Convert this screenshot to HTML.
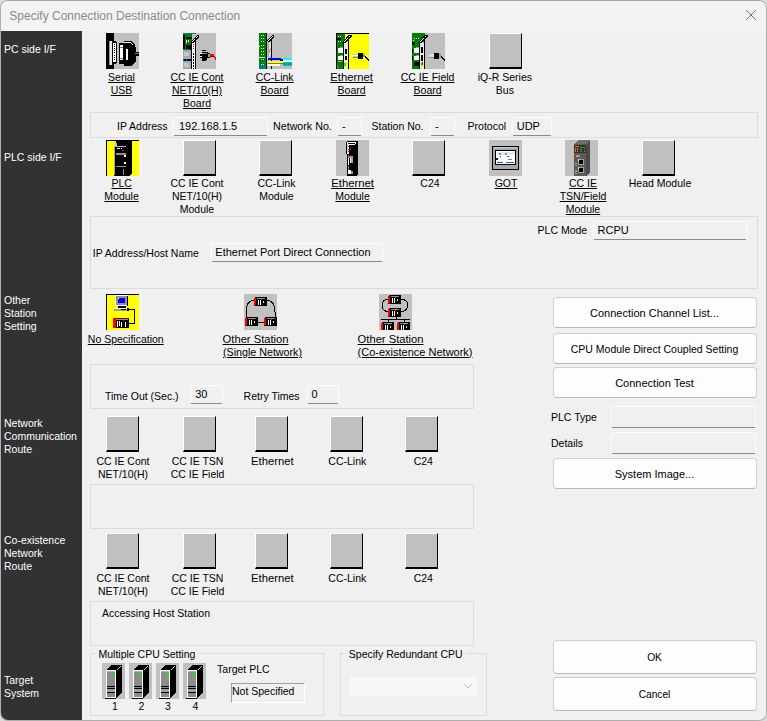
<!DOCTYPE html><html><head><meta charset="utf-8"><style>
html,body{margin:0;padding:0;}
body{width:767px;height:721px;overflow:hidden;position:relative;background:#dcdcdc;font-family:"Liberation Sans",sans-serif;}
.t{position:absolute;white-space:nowrap;}
.a{position:absolute;box-sizing:border-box;}
.gb{position:absolute;box-sizing:border-box;border:1px solid #dcdcdc;}
.fld{position:absolute;box-sizing:border-box;background:#f0f0f0;border:1px solid #fcfcfc;border-bottom:1px solid #8a8a8a;border-radius:2px;}
.btn{position:absolute;box-sizing:border-box;background:#fdfdfd;border:1px solid #d0d0d0;border-bottom-color:#b9b9b9;border-radius:4px;}
.gi{position:absolute;box-sizing:border-box;background:#c0c0c0;border-top:1px solid #fff;border-left:1px solid #fff;border-right:1px solid #000;border-bottom:2px solid #000;}
.ic{position:absolute;}
</style></head><body>
<div class="a" style="left:0px;top:0px;width:767px;height:721px;border:1px solid #b0b0b0;border-top-color:#93a9b3;border-radius:8px;background:#f0f0f0;"></div>
<div class="a" style="left:1px;top:1px;width:765px;height:30px;background:#f3f3f3;border-radius:7px 7px 0 0;"></div>
<div class="t" style="left:9.3px;top:7.84px;font-size:12px;line-height:16px;color:#8a8a8a;">Specify Connection Destination Connection</div>
<svg style="position:absolute;left:744px;top:8px" width="14" height="14"><path d="M2 2 L12 12 M12 2 L2 12" stroke="#777" stroke-width="1" fill="none"/></svg>
<div class="a" style="left:1px;top:31px;width:81px;height:689px;background:#323232;border-radius:0 0 0 7px;"></div>
<div class="t" style="left:4px;top:41.26px;font-size:10.5px;line-height:16px;color:#fff;">PC side I/F</div>
<div class="t" style="left:4px;top:149.46px;font-size:10.5px;line-height:16px;color:#fff;">PLC side I/F</div>
<div class="t" style="left:4px;top:292.16px;font-size:10.5px;line-height:16px;color:#fff;">Other</div>
<div class="t" style="left:4px;top:305.16px;font-size:10.5px;line-height:16px;color:#fff;">Station</div>
<div class="t" style="left:4px;top:318.16px;font-size:10.5px;line-height:16px;color:#fff;">Setting</div>
<div class="t" style="left:4px;top:414.76px;font-size:10.5px;line-height:16px;color:#fff;">Network</div>
<div class="t" style="left:4px;top:427.66px;font-size:10.5px;line-height:16px;color:#fff;">Communication</div>
<div class="t" style="left:4px;top:440.66px;font-size:10.5px;line-height:16px;color:#fff;">Route</div>
<div class="t" style="left:4px;top:531.86px;font-size:10.5px;line-height:16px;color:#fff;">Co-existence</div>
<div class="t" style="left:4px;top:544.86px;font-size:10.5px;line-height:16px;color:#fff;">Network</div>
<div class="t" style="left:4px;top:557.86px;font-size:10.5px;line-height:16px;color:#fff;">Route</div>
<div class="t" style="left:4px;top:671.86px;font-size:10.5px;line-height:16px;color:#fff;">Target</div>
<div class="t" style="left:4px;top:684.86px;font-size:10.5px;line-height:16px;color:#fff;">System</div>
<svg class="ic" style="left:106px;top:33px" width="33" height="36" shape-rendering="crispEdges"><rect x="0" y="0" width="33" height="36" fill="#c0c0c0"/><rect x="0" y="0" width="8" height="36" fill="#000"/><rect x="3" y="8" width="3" height="24" fill="#e6e6e6"/><rect x="3" y="8" width="1" height="24" fill="#9a9a9a"/><rect x="3" y="9" width="1" height="1" fill="#a0a000"/><rect x="3" y="28" width="1" height="3" fill="#a0a000"/><path d="M6 8h3l2 2v19l-2 2h-3z" fill="#000"/><rect x="7" y="10" width="3" height="19" fill="#fff"/><rect x="8" y="11" width="1" height="1" fill="#000"/><rect x="8" y="13" width="1" height="1" fill="#000"/><rect x="8" y="15" width="1" height="1" fill="#000"/><rect x="8" y="17" width="1" height="1" fill="#000"/><rect x="8" y="19" width="1" height="1" fill="#000"/><rect x="8" y="22" width="1" height="1" fill="#000"/><rect x="8" y="24" width="1" height="1" fill="#000"/><rect x="8" y="26" width="1" height="1" fill="#000"/><path d="M13 10h5v-2h7l4 4v2l1 1v4h3v4h-3v5l-5 5h-7v-2h-5z" fill="#000"/><rect x="14" y="12" width="3" height="15" fill="#fff"/><rect x="14" y="14" width="3" height="1" fill="#808080"/><rect x="14" y="25" width="3" height="1" fill="#808080"/><path d="M18 9h6l3 3" fill="none" stroke="#fff" stroke-width="1"/><rect x="20" y="16" width="2" height="11" fill="#fff"/><rect x="29" y="20" width="4" height="1" fill="#808080"/></svg>
<div class="t" style="left:51.5px;width:140px;text-align:center;top:69.06px;font-size:10.5px;line-height:16px;color:#000;text-decoration:underline;text-underline-offset:1px;">Serial</div>
<div class="t" style="left:51.5px;width:140px;text-align:center;top:82.06px;font-size:10.5px;line-height:16px;color:#000;text-decoration:underline;text-underline-offset:1px;">USB</div>
<svg class="ic" style="left:183px;top:33px" width="33" height="36" shape-rendering="crispEdges"><rect x="0" y="0" width="33" height="36" fill="#c0c0c0"/><rect x="0" y="0" width="13" height="1" fill="#008080"/><rect x="0" y="1" width="9" height="16" fill="#008000"/><rect x="0" y="2" width="2" height="15" fill="#000"/><rect x="3" y="4" width="6" height="2" fill="#000"/><rect x="3" y="7" width="1" height="3" fill="#fff"/><rect x="5" y="7" width="1" height="2" fill="#fff"/><rect x="3" y="12" width="5" height="5" fill="#000"/><rect x="3" y="13" width="1" height="3" fill="#0000a0"/><rect x="0" y="16" width="7" height="1" fill="#008080"/><rect x="0" y="17" width="8" height="19" fill="#a8a8a8"/><rect x="1" y="19" width="5" height="4" fill="#c8c8c8"/><rect x="1" y="30" width="5" height="4" fill="#c8c8c8"/><rect x="0" y="26" width="8" height="2" fill="#000080"/><rect x="0" y="26" width="1" height="2" fill="#008000"/><rect x="3" y="26" width="1" height="2" fill="#008000"/><path d="M8.5 8.5l6-6h1v1.5l-6 6z" fill="#fff" stroke="#000" stroke-width="1"/><rect x="9" y="10" width="3" height="26" fill="#fff"/><rect x="8" y="9" width="1" height="27" fill="#000"/><rect x="12" y="5" width="1" height="31" fill="#000"/><rect x="10" y="11" width="1" height="1" fill="#ff0000"/><rect x="10" y="13" width="1" height="1" fill="#ff0000"/><rect x="10" y="15" width="1" height="1" fill="#ff0000"/><rect x="10" y="20" width="1" height="2" fill="#000"/><rect x="10" y="23" width="1" height="2" fill="#000"/><rect x="10" y="26" width="1" height="2" fill="#000"/><rect x="10" y="29" width="1" height="2" fill="#000"/><rect x="10" y="32" width="1" height="2" fill="#000"/><rect x="10" y="35" width="1" height="2" fill="#000"/><rect x="19" y="17" width="4" height="1" fill="#000"/><rect x="19" y="19" width="6" height="1" fill="#000"/><rect x="17" y="20" width="2" height="1" fill="#fff"/><rect x="19" y="20" width="5" height="1" fill="#909090"/><rect x="24" y="20" width="3" height="1" fill="#000"/><rect x="17" y="21" width="10" height="4" fill="#000"/><rect x="17" y="23" width="2" height="1" fill="#fff"/><rect x="19" y="25" width="5" height="2" fill="#000"/><rect x="19" y="27" width="4" height="1" fill="#000"/><rect x="25" y="21" width="2" height="3" fill="#a0a0a0"/><rect x="27" y="21" width="4" height="2" fill="#ff0000"/><rect x="27" y="23" width="4" height="1" fill="#900000"/><rect x="31" y="23" width="1" height="2" fill="#ff0000"/><rect x="32" y="24" width="1" height="3" fill="#ff0000"/></svg>
<div class="t" style="left:127.0px;width:140px;text-align:center;top:69.06px;font-size:10.5px;line-height:16px;color:#000;text-decoration:underline;text-underline-offset:1px;">CC IE Cont</div>
<div class="t" style="left:127.0px;width:140px;text-align:center;top:82.06px;font-size:10.5px;line-height:16px;color:#000;text-decoration:underline;text-underline-offset:1px;">NET/10(H)</div>
<div class="t" style="left:127.0px;width:140px;text-align:center;top:95.06px;font-size:10.5px;line-height:16px;color:#000;text-decoration:underline;text-underline-offset:1px;">Board</div>
<svg class="ic" style="left:259px;top:33px" width="33" height="36" shape-rendering="crispEdges"><rect x="0" y="0" width="33" height="36" fill="#c0c0c0"/><rect x="0" y="0" width="7" height="36" fill="#008000"/><rect x="7" y="0" width="1" height="36" fill="#000"/><rect x="2" y="2" width="1" height="1" fill="#fff"/><rect x="4" y="2" width="1" height="1" fill="#fff"/><rect x="2" y="5" width="1" height="1" fill="#fff"/><rect x="4" y="5" width="1" height="1" fill="#fff"/><rect x="2" y="8" width="1" height="1" fill="#fff"/><rect x="4" y="8" width="1" height="1" fill="#fff"/><rect x="2" y="12" width="1" height="1" fill="#fff"/><rect x="4" y="12" width="1" height="1" fill="#fff"/><rect x="2" y="15" width="1" height="1" fill="#fff"/><rect x="4" y="15" width="1" height="1" fill="#fff"/><rect x="2" y="18" width="1" height="1" fill="#fff"/><rect x="4" y="18" width="1" height="1" fill="#fff"/><rect x="2" y="21" width="1" height="1" fill="#fff"/><rect x="4" y="21" width="1" height="1" fill="#fff"/><rect x="2" y="26" width="1" height="1" fill="#fff"/><rect x="4" y="26" width="1" height="1" fill="#fff"/><rect x="0" y="13" width="1" height="1" fill="#fff"/><rect x="0" y="24" width="6" height="1" fill="#fff"/><rect x="0" y="29" width="7" height="1" fill="#008080"/><rect x="0" y="32" width="7" height="4" fill="#008080"/><rect x="2" y="31" width="1" height="1" fill="#fff"/><rect x="4" y="31" width="1" height="1" fill="#fff"/><path d="M8.5 7.5l5-5h1v1.5l-5 5z" fill="#fff" stroke="#000" stroke-width="1"/><rect x="9" y="9" width="3" height="14" fill="#e0e0e0"/><rect x="9" y="9" width="1" height="14" fill="#a0a0a0"/><rect x="12" y="5" width="1" height="31" fill="#000"/><rect x="11" y="16" width="1" height="1" fill="#ff0000"/><rect x="10" y="18" width="1" height="1" fill="#ff0000"/><rect x="9" y="25" width="13" height="2" fill="#0000ff"/><rect x="21" y="26" width="3" height="2" fill="#0000a0"/><rect x="9" y="28" width="15" height="2" fill="#ffff00"/><rect x="9" y="30" width="15" height="1" fill="#808000"/><rect x="9" y="31" width="12" height="2" fill="#fff"/><rect x="8" y="25" width="1" height="1" fill="#fff"/><rect x="8" y="28" width="1" height="1" fill="#fff"/><rect x="8" y="31" width="1" height="1" fill="#fff"/><rect x="24" y="25" width="9" height="2" fill="#00ffff"/><rect x="24" y="27" width="9" height="2" fill="#fff"/><rect x="24" y="29" width="9" height="4" fill="#00c0c0"/><rect x="25" y="30" width="1" height="2" fill="#008080"/><rect x="27" y="30" width="1" height="2" fill="#008080"/><rect x="29" y="30" width="1" height="2" fill="#008080"/><rect x="31" y="30" width="1" height="2" fill="#008080"/></svg>
<div class="t" style="left:204.60000000000002px;width:140px;text-align:center;top:69.06px;font-size:10.5px;line-height:16px;color:#000;text-decoration:underline;text-underline-offset:1px;">CC-Link</div>
<div class="t" style="left:204.60000000000002px;width:140px;text-align:center;top:82.06px;font-size:10.5px;line-height:16px;color:#000;text-decoration:underline;text-underline-offset:1px;">Board</div>
<svg class="ic" style="left:336px;top:33px" width="33" height="36" shape-rendering="crispEdges"><rect x="0" y="0" width="33" height="36" fill="#ffff00"/><rect x="0" y="0" width="33" height="1" fill="#000"/><rect x="0" y="0" width="1" height="36" fill="#000"/><rect x="1" y="1" width="8" height="35" fill="#008000"/><rect x="1" y="5" width="4" height="2" fill="#000"/><rect x="2" y="3" width="1" height="1" fill="#fff"/><rect x="4" y="3" width="1" height="1" fill="#fff"/><rect x="2" y="8" width="1" height="1" fill="#fff"/><rect x="4" y="8" width="1" height="1" fill="#fff"/><rect x="2" y="15" width="6" height="5" fill="#fff"/><rect x="4" y="14" width="4" height="1" fill="#a0a0a0"/><rect x="2" y="23" width="6" height="4" fill="#fff"/><rect x="4" y="22" width="4" height="1" fill="#a0a0a0"/><rect x="2" y="28" width="4" height="1" fill="#a0a0a0"/><rect x="1" y="32" width="1" height="3" fill="#c08000"/><rect x="7" y="33" width="2" height="3" fill="#000"/><rect x="13" y="1" width="1" height="35" fill="#ffff00"/><path d="M7.5 8.5l6-6.5h1.5v1.5l-7 7z" fill="#fff" stroke="#000" stroke-width="1"/><rect x="8" y="10" width="4" height="26" fill="#e8e8e8"/><rect x="7" y="9" width="1" height="27" fill="#000"/><rect x="12" y="3" width="1" height="33" fill="#000"/><rect x="9" y="16" width="2" height="5" fill="#000"/><rect x="9" y="23" width="2" height="4" fill="#000"/><rect x="8" y="30" width="2" height="3" fill="#00ff00"/><rect x="10" y="28" width="2" height="6" fill="#ffff00"/><rect x="17" y="21" width="5" height="4" fill="#c8c8c8"/><rect x="17" y="22" width="5" height="1" fill="#fff"/><rect x="17" y="24" width="5" height="1" fill="#808080"/><rect x="22" y="20" width="5" height="6" fill="#000"/><rect x="27" y="21" width="2" height="3" fill="#909090"/><path d="M29 23l4 5" fill="none" stroke="#000" stroke-width="1.2"/></svg>
<div class="t" style="left:281.6px;width:140px;text-align:center;top:68.78px;font-size:11.3px;line-height:16px;color:#000;text-decoration:underline;text-underline-offset:1px;">Ethernet</div>
<div class="t" style="left:281.6px;width:140px;text-align:center;top:82.06px;font-size:10.5px;line-height:16px;color:#000;text-decoration:underline;text-underline-offset:1px;">Board</div>
<svg class="ic" style="left:412px;top:33px" width="33" height="36" shape-rendering="crispEdges"><rect x="0" y="0" width="33" height="36" fill="#c0c0c0"/><rect x="0" y="0" width="13" height="9" fill="#008000"/><rect x="0" y="9" width="9" height="27" fill="#008000"/><rect x="2" y="5" width="1" height="1" fill="#fff"/><rect x="4" y="5" width="1" height="1" fill="#fff"/><rect x="6" y="5" width="1" height="1" fill="#fff"/><rect x="1" y="7" width="1" height="1" fill="#fff"/><rect x="0" y="9" width="3" height="3" fill="#000"/><rect x="0" y="16" width="1" height="4" fill="#000"/><rect x="0" y="23" width="1" height="4" fill="#000"/><rect x="2" y="15" width="6" height="5" fill="#fff"/><rect x="4" y="14" width="4" height="1" fill="#a0a0a0"/><rect x="2" y="23" width="6" height="4" fill="#fff"/><rect x="4" y="22" width="4" height="1" fill="#a0a0a0"/><rect x="2" y="29" width="6" height="4" fill="#000"/><rect x="13" y="0" width="1" height="36" fill="#c0c0c0"/><path d="M7.5 8.5l6-6.5h1.5v1.5l-7 7z" fill="#fff" stroke="#000" stroke-width="1"/><rect x="8" y="10" width="4" height="26" fill="#e8e8e8"/><rect x="7" y="9" width="1" height="27" fill="#000"/><rect x="12" y="3" width="1" height="33" fill="#000"/><rect x="9" y="14" width="2" height="6" fill="#000"/><rect x="9" y="22" width="2" height="6" fill="#000"/><rect x="9" y="29" width="1" height="4" fill="#00ff00"/><rect x="10" y="29" width="1" height="3" fill="#ff0000"/><rect x="10" y="33" width="2" height="2" fill="#ffff00"/><rect x="17" y="21" width="5" height="4" fill="#e0e0e0"/><rect x="17" y="24" width="5" height="1" fill="#909090"/><rect x="22" y="20" width="5" height="6" fill="#000"/><rect x="27" y="21" width="2" height="3" fill="#909090"/><path d="M29 23l4 5" fill="none" stroke="#000" stroke-width="1.2"/></svg>
<div class="t" style="left:357.6px;width:140px;text-align:center;top:69.06px;font-size:10.5px;line-height:16px;color:#000;text-decoration:underline;text-underline-offset:1px;">CC IE Field</div>
<div class="t" style="left:357.6px;width:140px;text-align:center;top:82.06px;font-size:10.5px;line-height:16px;color:#000;text-decoration:underline;text-underline-offset:1px;">Board</div>
<div class="gi" style="left:489px;top:33px;width:33px;height:36px;"></div>
<div class="t" style="left:434.9px;width:140px;text-align:center;top:69.06px;font-size:10.5px;line-height:16px;color:#000;">iQ-R Series</div>
<div class="t" style="left:434.9px;width:140px;text-align:center;top:82.06px;font-size:10.5px;line-height:16px;color:#000;">Bus</div>
<div class="gb" style="left:90px;top:112px;width:668px;height:26px;"></div>
<div class="t" style="left:117px;top:118.06px;font-size:10.5px;line-height:16px;color:#000;">IP Address</div>
<div class="fld" style="left:173px;top:117px;width:95px;height:19px;"></div>
<div class="t" style="left:179px;top:117.79px;font-size:11px;line-height:16px;color:#000;">192.168.1.5</div>
<div class="t" style="left:273px;top:117.99px;font-size:10.7px;line-height:16px;color:#000;">Network No.</div>
<div class="fld" style="left:337px;top:117px;width:25px;height:19px;"></div>
<div class="t" style="left:342px;top:117.79px;font-size:11px;line-height:16px;color:#000;">-</div>
<div class="t" style="left:371.6px;top:118.06px;font-size:10.5px;line-height:16px;color:#000;">Station No.</div>
<div class="fld" style="left:430px;top:117px;width:25px;height:19px;"></div>
<div class="t" style="left:435px;top:117.79px;font-size:11px;line-height:16px;color:#000;">-</div>
<div class="t" style="left:467.6px;top:118.06px;font-size:10.5px;line-height:16px;color:#000;">Protocol</div>
<div class="fld" style="left:512px;top:117px;width:40px;height:19px;"></div>
<div class="t" style="left:516.7px;top:117.79px;font-size:11px;line-height:16px;color:#000;">UDP</div>
<svg class="ic" style="left:106px;top:140px" width="33" height="36" shape-rendering="crispEdges"><rect x="0" y="0" width="33" height="36" fill="#ffff00"/><rect x="0" y="0" width="33" height="1" fill="#000"/><rect x="0" y="1" width="1" height="35" fill="#000"/><path d="M10 1h16v32l-3 3h-15v-30l2-2z" fill="#000"/><rect x="8" y="6" width="1" height="29" fill="#a0a0a0"/><rect x="9" y="6" width="11" height="1" fill="#b0b0b0"/><rect x="11" y="8" width="3" height="1" fill="#fff"/><rect x="15" y="8" width="1" height="1" fill="#fff"/><rect x="16" y="10" width="2" height="1" fill="#ff0000"/><rect x="10" y="13" width="10" height="2" fill="#909090"/><rect x="18" y="15" width="2" height="2" fill="#fff"/><rect x="18" y="22" width="2" height="2" fill="#fff"/><rect x="10" y="26" width="10" height="1" fill="#909090"/><rect x="17" y="29" width="1" height="6" fill="#909090"/><rect x="9" y="3" width="2" height="3" fill="#c0c0c0"/></svg>
<div class="t" style="left:51.599999999999994px;width:140px;text-align:center;top:174.86px;font-size:10.5px;line-height:16px;color:#000;text-decoration:underline;text-underline-offset:1px;">PLC</div>
<div class="t" style="left:51.599999999999994px;width:140px;text-align:center;top:187.86px;font-size:10.5px;line-height:16px;color:#000;text-decoration:underline;text-underline-offset:1px;">Module</div>
<div class="gi" style="left:183px;top:140px;width:33px;height:36px;"></div>
<div class="t" style="left:127.0px;width:140px;text-align:center;top:174.86px;font-size:10.5px;line-height:16px;color:#000;">CC IE Cont</div>
<div class="t" style="left:127.0px;width:140px;text-align:center;top:187.86px;font-size:10.5px;line-height:16px;color:#000;">NET/10(H)</div>
<div class="t" style="left:127.0px;width:140px;text-align:center;top:200.86px;font-size:10.5px;line-height:16px;color:#000;">Module</div>
<div class="gi" style="left:259px;top:140px;width:33px;height:36px;"></div>
<div class="t" style="left:206.5px;width:140px;text-align:center;top:174.86px;font-size:10.5px;line-height:16px;color:#000;">CC-Link</div>
<div class="t" style="left:206.5px;width:140px;text-align:center;top:187.86px;font-size:10.5px;line-height:16px;color:#000;">Module</div>
<svg class="ic" style="left:336px;top:140px" width="33" height="36" shape-rendering="crispEdges"><rect x="0" y="0" width="33" height="36" fill="#c0c0c0"/><path d="M12 1h10v33l-2 2h-9v-21l-1-1v-12z" fill="#000"/><path d="M11 4l1-2h8l-1 2h-7v10" fill="none" stroke="#fff" stroke-width="1"/><rect x="11" y="4" width="1" height="10" fill="#d0d0d0"/><rect x="12" y="6" width="1" height="1" fill="#ff0000"/><rect x="12" y="9" width="1" height="1" fill="#ff0000"/><rect x="12" y="11" width="1" height="1" fill="#ff0000"/><rect x="14" y="8" width="1" height="2" fill="#ff0000"/><rect x="12" y="15" width="1" height="1" fill="#ff0000"/><rect x="14" y="15" width="1" height="1" fill="#ff0000"/><rect x="12" y="16" width="5" height="2" fill="#909090"/><rect x="12" y="18" width="1" height="7" fill="#fff"/><rect x="14" y="18" width="2" height="5" fill="#fff"/><rect x="15" y="16" width="2" height="7" fill="#a0a0a0"/><rect x="12" y="26" width="1" height="4" fill="#909090"/><rect x="12" y="30" width="3" height="4" fill="#fff"/><rect x="15" y="31" width="2" height="3" fill="#909090"/></svg>
<div class="t" style="left:282.6px;width:140px;text-align:center;top:174.58px;font-size:11.3px;line-height:16px;color:#000;text-decoration:underline;text-underline-offset:1px;">Ethernet</div>
<div class="t" style="left:282.6px;width:140px;text-align:center;top:187.86px;font-size:10.5px;line-height:16px;color:#000;text-decoration:underline;text-underline-offset:1px;">Module</div>
<div class="gi" style="left:412px;top:140px;width:33px;height:36px;"></div>
<div class="t" style="left:360.0px;width:140px;text-align:center;top:174.86px;font-size:10.5px;line-height:16px;color:#000;">C24</div>
<svg class="ic" style="left:489px;top:140px" width="33" height="36" shape-rendering="crispEdges"><rect x="0" y="0" width="33" height="36" fill="#c0c0c0"/><rect x="3" y="6" width="27" height="24" fill="#000"/><rect x="4" y="7" width="25" height="22" fill="#a8a8a8"/><rect x="5" y="7" width="23" height="1" fill="#d0d0d0"/><rect x="6" y="10" width="21" height="15" fill="#000"/><rect x="7" y="11" width="19" height="13" fill="#fff"/><rect x="8" y="12" width="18" height="3" fill="#e4e8f0"/><rect x="10" y="13" width="2" height="2" fill="#8090a0"/><rect x="16" y="13" width="2" height="2" fill="#8090a0"/><rect x="11" y="16" width="1" height="1" fill="#1050a0"/><rect x="18" y="16" width="2" height="1" fill="#1050a0"/><rect x="7" y="18" width="2" height="2" fill="#002040"/><rect x="19" y="19" width="4" height="1" fill="#6080a0"/><rect x="8" y="22" width="6" height="1" fill="#2060a0"/><rect x="17" y="22" width="8" height="1" fill="#2060a0"/></svg>
<div class="t" style="left:436.0px;width:140px;text-align:center;top:174.86px;font-size:10.5px;line-height:16px;color:#000;text-decoration:underline;text-underline-offset:1px;">GOT</div>
<svg class="ic" style="left:565px;top:140px" width="33" height="36" shape-rendering="crispEdges"><rect x="0" y="0" width="33" height="36" fill="#c0c0c0"/><path d="M9 4l4-4h12l-4 4z" fill="#6e6e6e"/><path d="M21 4l4-4v32l-4 4z" fill="#4a4a4a"/><rect x="9" y="4" width="12" height="32" fill="#5a5a5a"/><rect x="9" y="5" width="12" height="8" fill="#303030"/><rect x="10" y="6" width="4" height="1" fill="#ff6600"/><rect x="10" y="8" width="1" height="4" fill="#ff6600"/><rect x="12" y="8" width="1" height="4" fill="#ff6600"/><rect x="15" y="7" width="2" height="1" fill="#00e000"/><rect x="15" y="9" width="2" height="1" fill="#00e000"/><rect x="18" y="7" width="2" height="1" fill="#00e000"/><rect x="19" y="7" width="1" height="1" fill="#ff6600"/><rect x="19" y="9" width="1" height="1" fill="#ff6600"/><rect x="19" y="11" width="1" height="1" fill="#ff6600"/><rect x="15" y="11" width="2" height="1" fill="#707070"/><rect x="11" y="15" width="4" height="2" fill="#a0a0a0"/><rect x="13" y="19" width="6" height="6" fill="#a0a0a0"/><rect x="14" y="20" width="4" height="4" fill="#000"/><rect x="13" y="19" width="1" height="2" fill="#ffff00"/><rect x="13" y="27" width="6" height="6" fill="#a0a0a0"/><rect x="14" y="28" width="4" height="4" fill="#000"/><rect x="13" y="27" width="1" height="2" fill="#ffff00"/><rect x="10" y="23" width="2" height="1" fill="#a0a0a0"/><rect x="10" y="25" width="2" height="1" fill="#a0a0a0"/><rect x="10" y="30" width="2" height="2" fill="#a0a0a0"/><rect x="10" y="33" width="2" height="1" fill="#a0a0a0"/></svg>
<div class="t" style="left:513.0px;width:140px;text-align:center;top:174.86px;font-size:10.5px;line-height:16px;color:#000;text-decoration:underline;text-underline-offset:1px;">CC IE</div>
<div class="t" style="left:513.0px;width:140px;text-align:center;top:187.86px;font-size:10.5px;line-height:16px;color:#000;text-decoration:underline;text-underline-offset:1px;">TSN/Field</div>
<div class="t" style="left:513.0px;width:140px;text-align:center;top:200.86px;font-size:10.5px;line-height:16px;color:#000;text-decoration:underline;text-underline-offset:1px;">Module</div>
<div class="gi" style="left:642px;top:140px;width:33px;height:36px;"></div>
<div class="t" style="left:590.0px;width:140px;text-align:center;top:174.86px;font-size:10.5px;line-height:16px;color:#000;">Head Module</div>
<div class="gb" style="left:90px;top:216px;width:668px;height:73px;"></div>
<div class="t" style="left:537.6px;top:221.96px;font-size:10.5px;line-height:16px;color:#000;">PLC Mode</div>
<div class="fld" style="left:593px;top:221px;width:154px;height:19px;"></div>
<div class="t" style="left:597.5px;top:221.79px;font-size:11px;line-height:16px;color:#000;">RCPU</div>
<div class="t" style="left:92.8px;top:244.66px;font-size:10.5px;line-height:16px;color:#000;">IP Address/Host Name</div>
<div class="fld" style="left:211px;top:243px;width:172px;height:19px;"></div>
<div class="t" style="left:215.3px;top:243.79px;font-size:11px;line-height:16px;color:#000;">Ethernet Port Direct Connection</div>
<svg class="ic" style="left:106px;top:294px" width="33" height="36" shape-rendering="crispEdges"><rect x="0" y="0" width="33" height="36" fill="#ffff00"/><rect x="0" y="0" width="33" height="1" fill="#000"/><rect x="0" y="1" width="1" height="35" fill="#000"/><rect x="9" y="1" width="13" height="11" fill="#fff"/><rect x="10" y="2" width="11" height="9" fill="#909090"/><rect x="12" y="4" width="7" height="5" fill="#0000ff"/><rect x="12" y="4" width="1" height="1" fill="#fff"/><rect x="21" y="2" width="1" height="10" fill="#000"/><rect x="12" y="12" width="8" height="2" fill="#000"/><rect x="8" y="14" width="13" height="3" fill="#a0a0a0"/><rect x="8" y="14" width="13" height="1" fill="#fff"/><rect x="14" y="15" width="1" height="1" fill="#00ff00"/><rect x="15" y="15" width="5" height="1" fill="#000"/><rect x="21" y="14" width="2" height="3" fill="#000"/><rect x="23" y="15" width="6" height="1" fill="#000"/><rect x="28" y="15" width="1" height="15" fill="#000"/><rect x="23" y="29" width="6" height="1" fill="#000"/><rect x="7" y="24" width="3" height="10" fill="#ff0000"/><rect x="9" y="24" width="14" height="1" fill="#800000"/><rect x="10" y="25" width="13" height="9" fill="#000"/><rect x="10" y="25" width="12" height="1" fill="#909090"/><rect x="11" y="27" width="1" height="6" fill="#fff"/><rect x="13" y="27" width="1" height="5" fill="#fff"/><rect x="15" y="28" width="1" height="5" fill="#fff"/><rect x="17" y="26" width="1" height="1" fill="#ff0000"/><rect x="19" y="28" width="1" height="5" fill="#fff"/></svg>
<div class="t" style="left:87.8px;top:330.86px;font-size:10.5px;line-height:16px;color:#000;text-decoration:underline;text-underline-offset:1px;">No Specification</div>
<svg class="ic" style="left:244px;top:294px" width="33" height="36" shape-rendering="crispEdges"><rect x="0" y="0" width="33" height="36" fill="#c0c0c0"/><path d="M10 6 C3 7 2 13 2 18 L2 24 M23 6 C30 7 31 13 31 18 L31 24 M14 28 L20 28" fill="none" stroke="#000" stroke-width="1"/><rect x="10" y="4" width="2" height="8" fill="#ff0000"/><rect x="11" y="3" width="2" height="1" fill="#800000"/><rect x="10" y="11" width="2" height="1" fill="#800000"/><rect x="12" y="3" width="11" height="9" fill="#000"/><rect x="13" y="4" width="8" height="1" fill="#909090"/><rect x="14" y="6" width="1" height="5" fill="#fff"/><rect x="16" y="6" width="1" height="5" fill="#fff"/><rect x="17" y="5" width="1" height="1" fill="#ff0000"/><rect x="19" y="7" width="1" height="2" fill="#ffff00"/><rect x="1" y="24" width="2" height="8" fill="#ff0000"/><rect x="2" y="23" width="2" height="1" fill="#800000"/><rect x="1" y="31" width="2" height="1" fill="#800000"/><rect x="3" y="23" width="11" height="9" fill="#000"/><rect x="4" y="24" width="8" height="1" fill="#909090"/><rect x="5" y="26" width="1" height="5" fill="#fff"/><rect x="7" y="26" width="1" height="5" fill="#fff"/><rect x="8" y="25" width="1" height="1" fill="#ff0000"/><rect x="10" y="27" width="1" height="2" fill="#ffff00"/><rect x="20" y="24" width="2" height="8" fill="#ff0000"/><rect x="21" y="23" width="2" height="1" fill="#800000"/><rect x="20" y="31" width="2" height="1" fill="#800000"/><rect x="22" y="23" width="11" height="9" fill="#000"/><rect x="23" y="24" width="8" height="1" fill="#909090"/><rect x="24" y="26" width="1" height="5" fill="#fff"/><rect x="26" y="26" width="1" height="5" fill="#fff"/><rect x="27" y="25" width="1" height="1" fill="#ff0000"/><rect x="29" y="27" width="1" height="2" fill="#ffff00"/></svg>
<div class="t" style="left:222.6px;top:330.62px;font-size:11.2px;line-height:16px;color:#000;text-decoration:underline;text-underline-offset:1px;">Other Station</div>
<div class="t" style="left:223px;top:343.79px;font-size:10.7px;line-height:16px;color:#000;text-decoration:underline;text-underline-offset:1px;">(Single Network)</div>
<svg class="ic" style="left:379px;top:294px" width="33" height="36" shape-rendering="crispEdges"><rect x="0" y="0" width="33" height="36" fill="#c0c0c0"/><path d="M9 5 C1 6 1 16 9 18 M22 5 C31 6 31 16 22 18 M17 21 V25 M2 25.5 H31 M9 25 V28 M25 25 V28" fill="none" stroke="#000" stroke-width="1"/><rect x="9" y="2" width="2" height="8" fill="#ff0000"/><rect x="10" y="1" width="2" height="1" fill="#800000"/><rect x="9" y="9" width="2" height="1" fill="#800000"/><rect x="11" y="1" width="11" height="9" fill="#000"/><rect x="12" y="2" width="8" height="1" fill="#909090"/><rect x="13" y="4" width="1" height="5" fill="#fff"/><rect x="15" y="4" width="1" height="5" fill="#fff"/><rect x="16" y="3" width="1" height="1" fill="#ff0000"/><rect x="18" y="5" width="1" height="2" fill="#ffff00"/><rect x="9" y="15" width="2" height="8" fill="#ff0000"/><rect x="10" y="14" width="2" height="1" fill="#800000"/><rect x="9" y="22" width="2" height="1" fill="#800000"/><rect x="11" y="14" width="11" height="9" fill="#000"/><rect x="12" y="15" width="8" height="1" fill="#909090"/><rect x="13" y="17" width="1" height="5" fill="#fff"/><rect x="15" y="17" width="1" height="5" fill="#fff"/><rect x="16" y="16" width="1" height="1" fill="#ff0000"/><rect x="18" y="18" width="1" height="2" fill="#ffff00"/><rect x="2" y="29" width="2" height="8" fill="#ff0000"/><rect x="3" y="28" width="2" height="1" fill="#800000"/><rect x="2" y="36" width="2" height="1" fill="#800000"/><rect x="4" y="28" width="11" height="9" fill="#000"/><rect x="5" y="29" width="8" height="1" fill="#909090"/><rect x="6" y="31" width="1" height="5" fill="#fff"/><rect x="8" y="31" width="1" height="5" fill="#fff"/><rect x="9" y="30" width="1" height="1" fill="#ff0000"/><rect x="11" y="32" width="1" height="2" fill="#ffff00"/><rect x="18" y="29" width="2" height="8" fill="#ff0000"/><rect x="19" y="28" width="2" height="1" fill="#800000"/><rect x="18" y="36" width="2" height="1" fill="#800000"/><rect x="20" y="28" width="11" height="9" fill="#000"/><rect x="21" y="29" width="8" height="1" fill="#909090"/><rect x="22" y="31" width="1" height="5" fill="#fff"/><rect x="24" y="31" width="1" height="5" fill="#fff"/><rect x="25" y="30" width="1" height="1" fill="#ff0000"/><rect x="27" y="32" width="1" height="2" fill="#ffff00"/></svg>
<div class="t" style="left:357.6px;top:330.62px;font-size:11.2px;line-height:16px;color:#000;text-decoration:underline;text-underline-offset:1px;">Other Station</div>
<div class="t" style="left:357.6px;top:343.69px;font-size:11px;line-height:16px;color:#000;text-decoration:underline;text-underline-offset:1px;">(Co-existence Network)</div>
<div class="gb" style="left:90px;top:364px;width:384px;height:45px;"></div>
<div class="t" style="left:104.9px;top:388.16px;font-size:10.5px;line-height:16px;color:#000;">Time Out (Sec.)</div>
<div class="fld" style="left:190px;top:385px;width:33px;height:19px;"></div>
<div class="t" style="left:195.2px;top:385.89px;font-size:11px;line-height:16px;color:#000;">30</div>
<div class="t" style="left:243.6px;top:388.16px;font-size:10.5px;line-height:16px;color:#000;">Retry Times</div>
<div class="fld" style="left:307px;top:385px;width:32px;height:19px;"></div>
<div class="t" style="left:311.4px;top:385.89px;font-size:11px;line-height:16px;color:#000;">0</div>
<div class="btn" style="left:553px;top:297px;width:204px;height:31px;"></div>
<div class="t" style="left:552.5px;width:204px;text-align:center;top:305.29px;font-size:11px;line-height:16px;color:#000;">Connection Channel List...</div>
<div class="btn" style="left:553px;top:333px;width:204px;height:31px;"></div>
<div class="t" style="left:552.5px;width:204px;text-align:center;top:340.86px;font-size:10.5px;line-height:16px;color:#000;">CPU Module Direct Coupled Setting</div>
<div class="btn" style="left:553px;top:367px;width:204px;height:31px;"></div>
<div class="t" style="left:552.5px;width:204px;text-align:center;top:374.79px;font-size:11px;line-height:16px;color:#000;">Connection Test</div>
<div class="t" style="left:551px;top:408.86px;font-size:10.5px;line-height:16px;color:#000;">PLC Type</div>
<div class="fld" style="left:611px;top:406px;width:145px;height:22px;"></div>
<div class="t" style="left:551px;top:434.96px;font-size:10.5px;line-height:16px;color:#000;">Details</div>
<div class="fld" style="left:611px;top:432px;width:145px;height:22px;"></div>
<div class="btn" style="left:553px;top:458px;width:204px;height:31px;"></div>
<div class="t" style="left:552.5px;width:204px;text-align:center;top:465.99px;font-size:11px;line-height:16px;color:#000;">System Image...</div>
<div class="gi" style="left:106px;top:416px;width:33px;height:36px;"></div>
<div class="t" style="left:53.0px;width:140px;text-align:center;top:453.06px;font-size:10.5px;line-height:16px;color:#000;">CC IE Cont</div>
<div class="t" style="left:53.0px;width:140px;text-align:center;top:466.06px;font-size:10.5px;line-height:16px;color:#000;">NET/10(H)</div>
<div class="gi" style="left:106px;top:533px;width:33px;height:36px;"></div>
<div class="t" style="left:53.0px;width:140px;text-align:center;top:570.26px;font-size:10.5px;line-height:16px;color:#000;">CC IE Cont</div>
<div class="t" style="left:53.0px;width:140px;text-align:center;top:583.26px;font-size:10.5px;line-height:16px;color:#000;">NET/10(H)</div>
<div class="gi" style="left:183px;top:416px;width:33px;height:36px;"></div>
<div class="t" style="left:127.6px;width:140px;text-align:center;top:453.06px;font-size:10.5px;line-height:16px;color:#000;">CC IE TSN</div>
<div class="t" style="left:127.6px;width:140px;text-align:center;top:466.06px;font-size:10.5px;line-height:16px;color:#000;">CC IE Field</div>
<div class="gi" style="left:183px;top:533px;width:33px;height:36px;"></div>
<div class="t" style="left:127.6px;width:140px;text-align:center;top:570.26px;font-size:10.5px;line-height:16px;color:#000;">CC IE TSN</div>
<div class="t" style="left:127.6px;width:140px;text-align:center;top:583.26px;font-size:10.5px;line-height:16px;color:#000;">CC IE Field</div>
<div class="gi" style="left:255px;top:416px;width:33px;height:36px;"></div>
<div class="t" style="left:202.39999999999998px;width:140px;text-align:center;top:452.78px;font-size:11.3px;line-height:16px;color:#000;">Ethernet</div>
<div class="gi" style="left:255px;top:533px;width:33px;height:36px;"></div>
<div class="t" style="left:202.39999999999998px;width:140px;text-align:center;top:569.98px;font-size:11.3px;line-height:16px;color:#000;">Ethernet</div>
<div class="gi" style="left:330px;top:416px;width:33px;height:36px;"></div>
<div class="t" style="left:277.3px;width:140px;text-align:center;top:453.06px;font-size:10.5px;line-height:16px;color:#000;">CC-Link</div>
<div class="gi" style="left:330px;top:533px;width:33px;height:36px;"></div>
<div class="t" style="left:277.3px;width:140px;text-align:center;top:570.26px;font-size:10.5px;line-height:16px;color:#000;">CC-Link</div>
<div class="gi" style="left:405px;top:416px;width:33px;height:36px;"></div>
<div class="t" style="left:353.3px;width:140px;text-align:center;top:453.06px;font-size:10.5px;line-height:16px;color:#000;">C24</div>
<div class="gi" style="left:405px;top:533px;width:33px;height:36px;"></div>
<div class="t" style="left:353.3px;width:140px;text-align:center;top:570.26px;font-size:10.5px;line-height:16px;color:#000;">C24</div>
<div class="gb" style="left:90px;top:484px;width:384px;height:45px;"></div>
<div class="gb" style="left:90px;top:601px;width:384px;height:45px;"></div>
<div class="t" style="left:102px;top:605.06px;font-size:10.5px;line-height:16px;color:#000;">Accessing Host Station</div>
<div class="gb" style="left:90px;top:653px;width:234px;height:63px;"></div>
<div class="a" style="left:96px;top:648px;width:101px;height:12px;background:#f0f0f0"></div>
<div class="t" style="left:98.5px;top:646.06px;font-size:10.5px;line-height:16px;color:#000;">Multiple CPU Setting</div>
<svg class="ic" style="left:102px;top:663px" width="23" height="36" shape-rendering="crispEdges"><rect x="0" y="0" width="23" height="36" fill="#c0c0c0"/><path d="M4 7l5-5h11l-6 5z" fill="#000"/><path d="M14 7l6-5v27l-6 6z" fill="#000"/><rect x="4" y="7" width="10" height="28" fill="#fff"/><rect x="5" y="8" width="8" height="26" fill="#8c8c8c"/><rect x="5" y="8" width="8" height="1" fill="#b0b0b0"/><rect x="9" y="10" width="3" height="1" fill="#00ff00"/><rect x="9" y="12" width="3" height="1" fill="#00ff00"/><rect x="5" y="23" width="8" height="1" fill="#000"/><rect x="5" y="25" width="8" height="1" fill="#000"/><rect x="5" y="29" width="8" height="1" fill="#000"/><rect x="5" y="26" width="8" height="3" fill="#a0a0a0"/><rect x="3" y="35" width="11" height="1" fill="#000"/><path d="M15 7l4-4" fill="none" stroke="#d0d0d0" stroke-width="1"/></svg>
<div class="t" style="left:104.8px;width:20px;text-align:center;top:697.86px;font-size:10.5px;line-height:16px;color:#000;">1</div>
<svg class="ic" style="left:129px;top:663px" width="23" height="36" shape-rendering="crispEdges"><rect x="0" y="0" width="23" height="36" fill="#c0c0c0"/><path d="M4 7l5-5h11l-6 5z" fill="#000"/><path d="M14 7l6-5v27l-6 6z" fill="#000"/><rect x="4" y="7" width="10" height="28" fill="#fff"/><rect x="5" y="8" width="8" height="26" fill="#8c8c8c"/><rect x="5" y="8" width="8" height="1" fill="#b0b0b0"/><rect x="9" y="10" width="3" height="1" fill="#00ff00"/><rect x="9" y="12" width="3" height="1" fill="#00ff00"/><rect x="5" y="23" width="8" height="1" fill="#000"/><rect x="5" y="25" width="8" height="1" fill="#000"/><rect x="5" y="29" width="8" height="1" fill="#000"/><rect x="5" y="26" width="8" height="3" fill="#a0a0a0"/><rect x="3" y="35" width="11" height="1" fill="#000"/><path d="M15 7l4-4" fill="none" stroke="#d0d0d0" stroke-width="1"/></svg>
<div class="t" style="left:131.3px;width:20px;text-align:center;top:697.86px;font-size:10.5px;line-height:16px;color:#000;">2</div>
<svg class="ic" style="left:156px;top:663px" width="23" height="36" shape-rendering="crispEdges"><rect x="0" y="0" width="23" height="36" fill="#c0c0c0"/><path d="M4 7l5-5h11l-6 5z" fill="#000"/><path d="M14 7l6-5v27l-6 6z" fill="#000"/><rect x="4" y="7" width="10" height="28" fill="#fff"/><rect x="5" y="8" width="8" height="26" fill="#8c8c8c"/><rect x="5" y="8" width="8" height="1" fill="#b0b0b0"/><rect x="9" y="10" width="3" height="1" fill="#00ff00"/><rect x="9" y="12" width="3" height="1" fill="#00ff00"/><rect x="5" y="23" width="8" height="1" fill="#000"/><rect x="5" y="25" width="8" height="1" fill="#000"/><rect x="5" y="29" width="8" height="1" fill="#000"/><rect x="5" y="26" width="8" height="3" fill="#a0a0a0"/><rect x="3" y="35" width="11" height="1" fill="#000"/><path d="M15 7l4-4" fill="none" stroke="#d0d0d0" stroke-width="1"/></svg>
<div class="t" style="left:157.8px;width:20px;text-align:center;top:697.86px;font-size:10.5px;line-height:16px;color:#000;">3</div>
<svg class="ic" style="left:183px;top:663px" width="23" height="36" shape-rendering="crispEdges"><rect x="0" y="0" width="23" height="36" fill="#c0c0c0"/><path d="M4 7l5-5h11l-6 5z" fill="#000"/><path d="M14 7l6-5v27l-6 6z" fill="#000"/><rect x="4" y="7" width="10" height="28" fill="#fff"/><rect x="5" y="8" width="8" height="26" fill="#8c8c8c"/><rect x="5" y="8" width="8" height="1" fill="#b0b0b0"/><rect x="9" y="10" width="3" height="1" fill="#00ff00"/><rect x="9" y="12" width="3" height="1" fill="#00ff00"/><rect x="5" y="23" width="8" height="1" fill="#000"/><rect x="5" y="25" width="8" height="1" fill="#000"/><rect x="5" y="29" width="8" height="1" fill="#000"/><rect x="5" y="26" width="8" height="3" fill="#a0a0a0"/><rect x="3" y="35" width="11" height="1" fill="#000"/><path d="M15 7l4-4" fill="none" stroke="#d0d0d0" stroke-width="1"/></svg>
<div class="t" style="left:185.5px;width:20px;text-align:center;top:697.86px;font-size:10.5px;line-height:16px;color:#000;">4</div>
<div class="t" style="left:217.1px;top:661.36px;font-size:10.5px;line-height:16px;color:#000;">Target PLC</div>
<div class="a" style="left:231px;top:683px;width:74px;height:20px;border:1px solid;border-color:#a0a0a0 #fff #fff #a0a0a0;"></div>
<div class="t" style="left:232px;top:683.06px;font-size:10.5px;line-height:16px;color:#000;">Not Specified</div>
<div class="gb" style="left:340px;top:653px;width:147px;height:63px;"></div>
<div class="a" style="left:345px;top:648px;width:121px;height:12px;background:#f0f0f0"></div>
<div class="t" style="left:348.8px;top:646.06px;font-size:10.5px;line-height:16px;color:#000;">Specify Redundant CPU</div>
<div class="a" style="left:350px;top:677px;width:127px;height:19px;background:#f8f8f8;"></div>
<svg style="position:absolute;left:463px;top:683px" width="10" height="7"><path d="M1 1 L5 5 L9 1" stroke="#bcbcbc" fill="none"/></svg>
<div class="btn" style="left:553px;top:640px;width:204px;height:34px;"></div>
<div class="t" style="left:552.5px;width:204px;text-align:center;top:650.47px;font-size:10.2px;line-height:16px;color:#000;">OK</div>
<div class="btn" style="left:553px;top:677px;width:204px;height:34px;"></div>
<div class="t" style="left:552.5px;width:204px;text-align:center;top:687.47px;font-size:10.2px;line-height:16px;color:#000;">Cancel</div>
</body></html>
